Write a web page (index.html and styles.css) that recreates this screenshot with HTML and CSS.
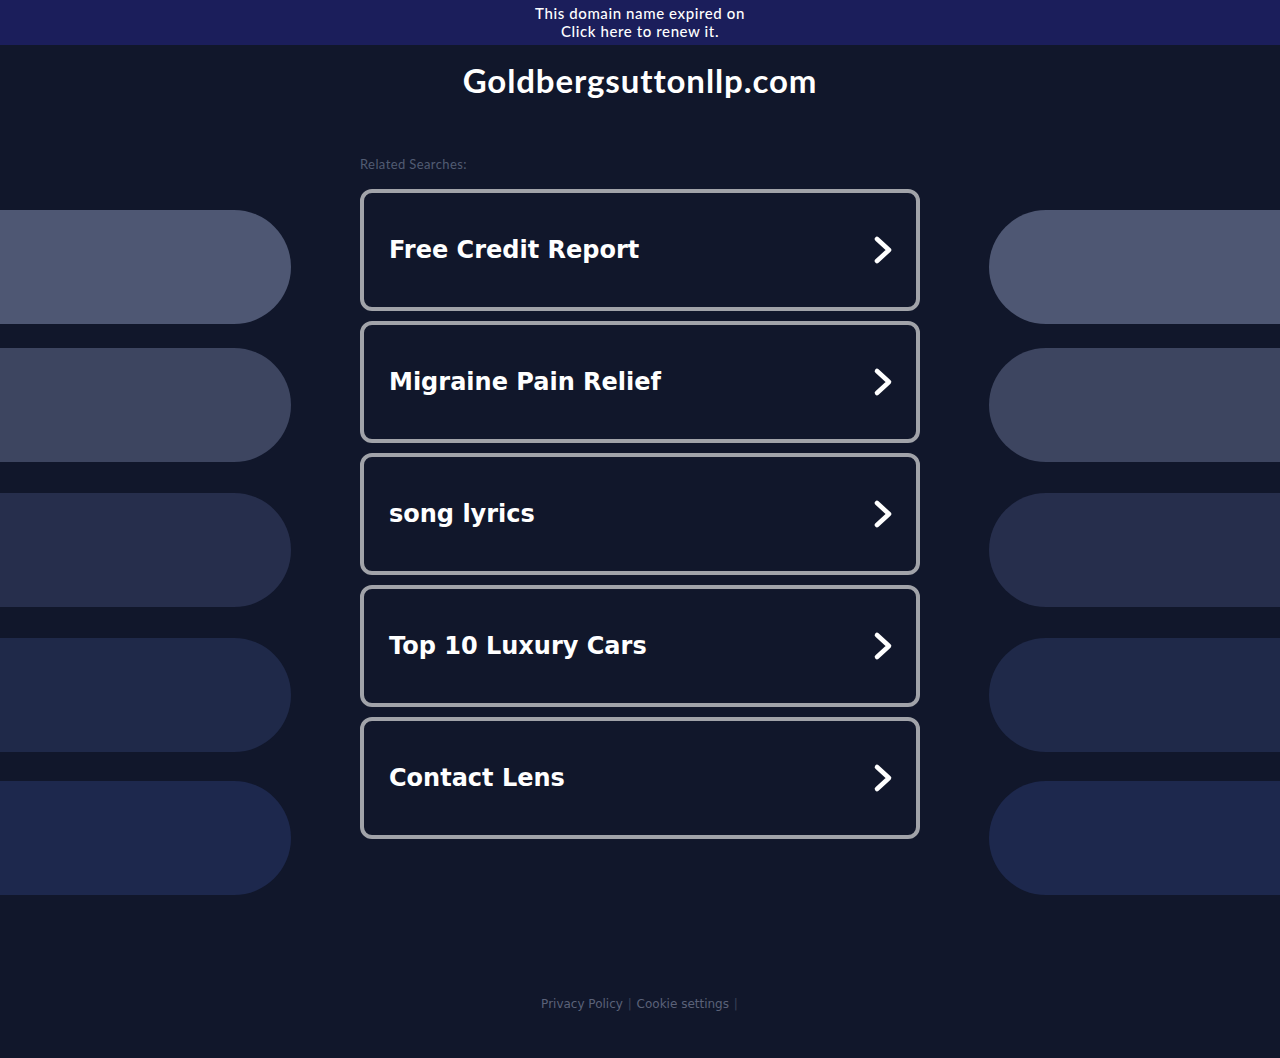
FILE: index.html
```html
<!DOCTYPE html>
<html lang="en">
<head>
  <meta charset="UTF-8">
  <title>Goldbergsuttonllp.com</title>
  <link rel="stylesheet" href="styles.css">
</head>
<body>

<!-- Renewal notice -->
<a class="expired-bar" href="#">
  This domain name expired on<br>
  Click here to renew it.
</a>

<header class="domain-header">
  <h1 id="domainName">Goldbergsuttonllp.com</h1>
</header>

<main class="layout">
  <div class="side side-left">
    <span class="pill pill-1"></span>
    <span class="pill pill-2"></span>
    <span class="pill pill-3"></span>
    <span class="pill pill-4"></span>
    <span class="pill pill-5"></span>
  </div>

  <section class="searches">
    <p class="searches-label">Related Searches:</p>

    <a class="search-card" href="#">
      <span>Free Credit Report</span>
      <svg class="chevron" viewBox="0 0 24 32"><polyline points="6,5 18,16 6,27"/></svg>
    </a>
    <a class="search-card" href="#">
      <span>Migraine Pain Relief</span>
      <svg class="chevron" viewBox="0 0 24 32"><polyline points="6,5 18,16 6,27"/></svg>
    </a>
    <a class="search-card" href="#">
      <span>song lyrics</span>
      <svg class="chevron" viewBox="0 0 24 32"><polyline points="6,5 18,16 6,27"/></svg>
    </a>
    <a class="search-card" href="#">
      <span>Top 10 Luxury Cars</span>
      <svg class="chevron" viewBox="0 0 24 32"><polyline points="6,5 18,16 6,27"/></svg>
    </a>
    <a class="search-card" href="#">
      <span>Contact Lens</span>
      <svg class="chevron" viewBox="0 0 24 32"><polyline points="6,5 18,16 6,27"/></svg>
    </a>
  </section>

  <div class="side side-right">
    <span class="pill pill-1"></span>
    <span class="pill pill-2"></span>
    <span class="pill pill-3"></span>
    <span class="pill pill-4"></span>
    <span class="pill pill-5"></span>
  </div>
</main>

<footer class="site-footer">
  <a href="#">Privacy Policy</a>
  <span class="sep">|</span>
  <a href="#">Cookie settings</a>
  <span class="sep">|</span>
</footer>

</body>
</html>
```

FILE: styles.css
```css
:root {
  --background: #11172b;
  --bar: #1b1e5b;
  --card-border: #a1a3a9;
  --muted: #525c73;
  --footer: #5b6279;
  --heading-font: 'Lato', 'Open Sans', Arial, sans-serif;
  --card-font: 'DejaVu Sans', Verdana, sans-serif;
}

body {
  background: var(--background);
  color: #fff;
  margin: 0;
  padding: 0;
}

a {
  text-decoration: none;
  color: inherit;
}

.expired-bar {
  display: block;
  background: var(--bar);
  color: #fff;
  text-align: center;
  font-family: var(--heading-font);
  font-size: 15px;
  font-weight: 500;
  letter-spacing: 0.6px;
  line-height: 18px;
  padding: 4px 0 5px 0;
}

.domain-header {
  text-align: center;
  padding-top: 16px;
}

#domainName {
  margin: 0;
  font-family: var(--heading-font);
  font-size: 33px;
  font-weight: 700;
  line-height: 38px;
  letter-spacing: 0.9px;
}

.layout {
  display: grid;
  grid-template-columns: 291px 560px 291px;
  justify-content: space-between;
  margin-top: 57px;
}

/* decorative rounded bars either side of the list */
.side {
  display: flex;
  flex-direction: column;
  padding-top: 54px;
}

.pill {
  display: block;
  height: 114px;
}
.side-left .pill {
  border-radius: 0 57px 57px 0;
}
.side-right .pill {
  border-radius: 57px 0 0 57px;
}

.pill-1 { background: #4e5773; }
.pill-2 { background: #3d4560; margin-top: 24px; }
.pill-3 { background: #262e4c; margin-top: 31px; }
.pill-4 { background: #1f2949; margin-top: 31px; }
.pill-5 { background: #1d284d; margin-top: 29px; }

.searches {
  display: flex;
  flex-direction: column;
  gap: 10px;
}

.searches-label {
  margin: 0 0 7px 0;
  font-family: var(--heading-font);
  font-size: 13px;
  letter-spacing: 0.4px;
  line-height: 16px;
  color: var(--muted);
}

.search-card {
  display: flex;
  align-items: center;
  justify-content: space-between;
  height: 114px;
  border: 4px solid var(--card-border);
  border-radius: 12px;
  padding: 0 21px 0 25px;
  font-family: var(--card-font);
  font-size: 24px;
  font-weight: 700;
  color: #fff;
}

.chevron {
  width: 24px;
  height: 32px;
  fill: none;
  stroke: #fff;
  stroke-width: 4.6;
  stroke-linecap: round;
  stroke-linejoin: round;
}

.site-footer {
  margin-top: 102px;
  padding-bottom: 40px;
  text-align: center;
  font-family: var(--card-font);
  font-size: 12px;
  color: var(--footer);
}
.site-footer .sep {
  color: #3a4158;
  margin: 0 1px;
}
```
